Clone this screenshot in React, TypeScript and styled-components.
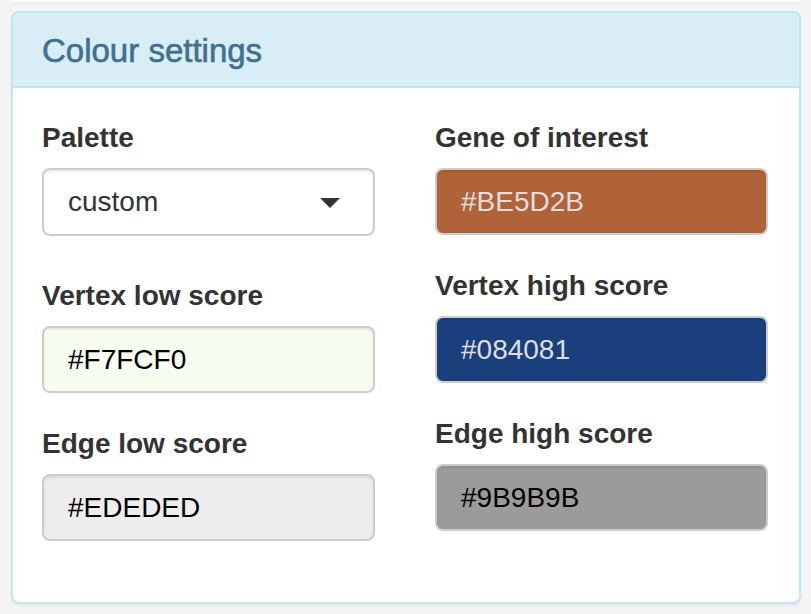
import styled, { createGlobalStyle } from "styled-components";

const GlobalStyle = createGlobalStyle`
  html, body {
    margin: 0;
    padding: 0;
    background: #f5f5f5;
    font-family: "Liberation Sans", Arial, sans-serif;
    color: #333;
  }
  * {
    box-sizing: border-box;
  }
`;

const Page = styled.div`
  padding: 0 11px 11px 11px;
`;

const PrevEdge = styled.div`
  height: 2px;
  background: #fff;
  border-radius: 0 0 8px 8px;
  box-shadow: 0 1px 4px rgba(0, 0, 0, 0.12);
  margin-bottom: 9px;
`;

const Panel = styled.section`
  width: 790px;
  background: #fff;
  border: 2px solid #bce8f1;
  border-radius: 8px;
  box-shadow: 0 2px 3px rgba(0, 0, 0, 0.06);
  overflow: hidden;
`;

const PanelHeading = styled.header`
  background: #d9edf7;
  border-bottom: 2px solid #bce8f1;
  padding: 20px 29px 18px 29px;
`;

const PanelTitle = styled.h3`
  margin: 0;
  font-size: 33px;
  line-height: 35px;
  font-weight: 400;
  color: #41708f;
  -webkit-text-stroke: 0.6px #41708f;
`;

const PanelBody = styled.div`
  padding: 30px 29px 30px 29px;
`;

const Row = styled.div`
  display: grid;
  grid-template-columns: 333px 333px;
  column-gap: 60px;
  align-items: start;
`;

const Column = styled.div`
  display: flex;
  flex-direction: column;
`;

const FormGroup = styled.div<{ $extra?: boolean }>`
  margin-bottom: ${(p) => (p.$extra ? "40px" : "31px")};
  display: flex;
  flex-direction: column;
`;

const Label = styled.label`
  font-size: 28px;
  line-height: 40px;
  font-weight: 700;
  color: #333;
  margin-bottom: 10px;
`;

const SelectBox = styled.div`
  position: relative;
  height: 68px;
  border: 2px solid #ccc;
  border-radius: 8px;
  background: #fff;
  box-shadow: inset 0 2px 2px rgba(0, 0, 0, 0.075);
  display: flex;
  align-items: center;
  padding: 0 24px;
  font-size: 28px;
  color: #333;
`;

const Caret = styled.span`
  position: absolute;
  right: 33px;
  top: 50%;
  margin-top: -4px;
  width: 0;
  height: 0;
  border-left: 10px solid transparent;
  border-right: 10px solid transparent;
  border-top: 10px solid #333;
`;

const ColourInput = styled.div<{ $bg: string; $fg: string }>`
  height: 67px;
  border: 2px solid #ccc;
  border-radius: 8px;
  background: ${(p) => p.$bg};
  color: ${(p) => p.$fg};
  box-shadow: inset 0 2px 2px rgba(0, 0, 0, 0.075);
  display: flex;
  align-items: center;
  padding: 0 24px;
  font-size: 28px;
`;

type Field = { label: string; bg: string; fg: string; value: string };

const leftFields: Field[] = [
  { label: "Vertex low score", bg: "#f7fcf0", fg: "#000", value: "#F7FCF0" },
  { label: "Edge low score", bg: "#ededed", fg: "#000", value: "#EDEDED" },
];

const rightFields: Field[] = [
  { label: "Gene of interest", bg: "#b06238", fg: "#dedede", value: "#BE5D2B" },
  { label: "Vertex high score", bg: "#1b3f7d", fg: "#dedede", value: "#084081" },
  { label: "Edge high score", bg: "#9b9b9b", fg: "#000", value: "#9B9B9B" },
];

const App = () => {
  return (
    <>
      <GlobalStyle />
      <Page>
        <PrevEdge />
        <Panel>
          <PanelHeading>
            <PanelTitle>Colour settings</PanelTitle>
          </PanelHeading>
          <PanelBody>
            <Row>
              <Column>
                <FormGroup $extra>
                  <Label>Palette</Label>
                  <SelectBox>
                    custom
                    <Caret />
                  </SelectBox>
                </FormGroup>
                {leftFields.map((f) => (
                  <FormGroup key={f.label}>
                    <Label>{f.label}</Label>
                    <ColourInput $bg={f.bg} $fg={f.fg}>
                      {f.value}
                    </ColourInput>
                  </FormGroup>
                ))}
              </Column>
              <Column>
                {rightFields.map((f) => (
                  <FormGroup key={f.label}>
                    <Label>{f.label}</Label>
                    <ColourInput $bg={f.bg} $fg={f.fg}>
                      {f.value}
                    </ColourInput>
                  </FormGroup>
                ))}
              </Column>
            </Row>
          </PanelBody>
        </Panel>
      </Page>
    </>
  );
};

export default App;
